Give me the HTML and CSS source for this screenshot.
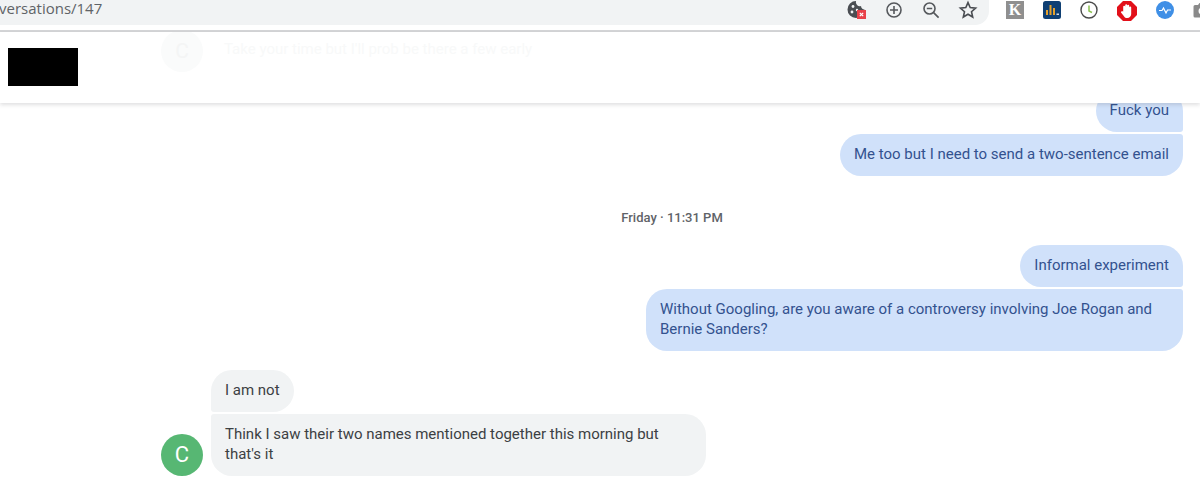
FILE: index.html
```html
<!DOCTYPE html>
<html lang="en">
<head>
  <meta charset="UTF-8">
  <title>Conversation</title>
  <link rel="stylesheet" href="styles.css">
</head>
<body>
  <div class="browser">
    <div class="omnibox">
      <span class="url">versations/147</span>
      <div class="omni-icons">
        <svg class="icon" width="20" height="20" viewBox="0 0 20 20">
          <path d="M9 1a8.500 8.500 0 1 0 8.500 8.500A4 4 0 0 1 14 6a4 4 0 0 1-5-5z" fill="#4a4d52"/>
          <circle cx="6" cy="6.500" r="1.400" fill="#f1f3f4"/>
          <circle cx="5" cy="12" r="1.400" fill="#f1f3f4"/>
          <circle cx="10" cy="10" r="1.200" fill="#f1f3f4"/>
          <rect x="10" y="10" width="9" height="9" fill="#e8414a"/>
          <path d="M12.800 12.800l3.400 3.400m0-3.400l-3.400 3.400" stroke="#fff" stroke-width="1.200"/>
        </svg>
        <svg class="icon" width="20" height="20" viewBox="0 0 20 20" fill="none" stroke="#55585c" stroke-width="1.600">
          <circle cx="10" cy="10" r="7"/>
          <path d="M10 6v8M6 10h8"/>
        </svg>
        <svg class="icon" width="20" height="20" viewBox="0 0 20 20" fill="none" stroke="#55585c" stroke-width="1.600">
          <circle cx="8.500" cy="8.500" r="5.500"/>
          <path d="M5.800 8.500h5.400M12.600 12.600l5 5"/>
        </svg>
        <svg class="icon" width="20" height="20" viewBox="0 0 20 20" fill="none" stroke="#4a4d52" stroke-width="1.600">
          <path d="M10 2.600l2.200 5 5.400.5-4.100 3.600 1.200 5.300L10 14.200l-4.700 2.800 1.200-5.300L2.400 8.100l5.400-.5z"/>
        </svg>
      </div>
    </div>
    <div class="extensions">
      <div class="ext ext-k">K</div>
      <svg class="ext" width="18" height="18" viewBox="0 0 18 18">
        <rect width="18" height="18" rx="2.500" fill="#0f3f73"/>
        <path d="M3 14V9h2v5zM6.500 14V4h2v10zM10 14V7h2v7z" fill="#e5a12c"/>
        <rect x="13.500" y="12.500" width="2.500" height="1.500" fill="#d8dde3"/>
      </svg>
      <svg class="ext" width="18" height="18" viewBox="0 0 18 18" fill="none">
        <circle cx="9" cy="9" r="8" stroke="#4b4b4b" stroke-width="1.400"/>
        <path d="M9 4.500V10l3 1.500" stroke="#8cc152" stroke-width="1.500"/>
      </svg>
      <svg class="ext" width="20" height="20" viewBox="0 0 20 20">
        <path d="M6 0h8l6 6v8l-6 6H6l-6-6V6z" fill="#e2101a"/>
        <path d="M6.200 10.500V5.800a1 1 0 0 1 2 0V4.200a1 1 0 0 1 2 0v.6a1 1 0 0 1 2 0V6.400a1 1 0 0 1 2 0V13c0 2.300-1.600 4-3.900 4-2 0-3-1-3.900-2.600L4 11.600c-.6-1.100 1.300-2 2.200-1.100z" fill="#fff"/>
      </svg>
      <svg class="ext" width="18" height="18" viewBox="0 0 18 18">
        <circle cx="9" cy="9" r="9" fill="#3f8fe6"/>
        <path d="M3 9.500h3l1.500-2.500L10 12l1.500-3h3.500" fill="none" stroke="#fff" stroke-width="1.200"/>
      </svg>
      <svg class="ext" width="18" height="18" viewBox="0 0 18 18">
        <path d="M2 4h3l1.500-2h5L13 4h3a1.500 1.500 0 0 1 1.500 1.500V15a1.500 1.500 0 0 1-1.500 1.500H2A1.500 1.500 0 0 1 .5 15V5.500A1.500 1.500 0 0 1 2 4z" fill="#8a8a8a"/>
        <circle cx="9" cy="10" r="3.500" fill="#fff"/>
      </svg>
    </div>
  </div>

  <header class="topbar">
    <div class="redacted"></div>
    <div class="ghost-avatar">C</div>
    <div class="ghost-text">Take your time but I'll prob be there a few early</div>
  </header>

  <main class="thread">
    <div class="bubble out first">Fuck you</div>
    <div class="bubble out last">Me too but I need to send a two-sentence email</div>

    <div class="stamp">Friday · 11:31 PM</div>

    <div class="bubble out first">Informal experiment</div>
    <div class="bubble out last wide-out">Without Googling, are you aware of a controversy involving Joe Rogan and Bernie Sanders?</div>

    <div class="incoming">
      <div class="avatar">C</div>
      <div class="incoming-stack">
        <div class="bubble in first">I am not</div>
        <div class="bubble in last wide-in">Think I saw their two names mentioned together this morning but that's it</div>
      </div>
    </div>
  </main>
</body>
</html>
```

FILE: styles.css
```css
* { margin: 0; padding: 0; box-sizing: border-box; }
html, body {
  height: 100%;
  overflow: hidden;
}
body {
  font-family: Roboto, sans-serif;
  background: #fff;
}
.browser {
  display: flex;
  height: 32px;
  background: #fff;
  border-bottom: 2px solid #d4d5d7;
}
.omnibox {
  width: 989px;
  height: 25px;
  background: #f1f3f4;
  border-bottom-right-radius: 14px;
  display: flex;
  align-items: center;
  justify-content: space-between;
  padding-right: 11px;
}
.url {
  font-family: "Open Sans", sans-serif;
  font-size: 15px;
  color: #606367;
  margin-left: -1px;
  margin-top: -9px;
}
.omni-icons {
  display: flex;
  gap: 17px;
  margin-top: -6px;
}
.extensions {
  display: flex;
  align-items: flex-start;
  gap: 19px;
  padding-left: 17px;
  padding-top: 1px;
  overflow: hidden;
  flex: 1;
}
.ext {
  flex-shrink: 0;
}
.ext-k {
  width: 18px;
  height: 18px;
  background: #8f8f8f;
  color: #fff;
  font-family: "Liberation Serif", serif;
  font-weight: bold;
  font-size: 16px;
  line-height: 18px;
  text-align: center;
}
.topbar {
  position: relative;
  z-index: 2;
  height: 71px;
  background: #fff;
  box-shadow: 0 2px 4px rgba(60, 64, 67, 0.16);
  display: flex;
  align-items: flex-start;
  overflow: hidden;
}
.redacted {
  width: 70px;
  height: 38px;
  background: #000;
  margin: 16px 0 0 8px;
}
.ghost-avatar {
  width: 42px;
  height: 42px;
  border-radius: 50%;
  background: #fafbfb;
  color: #f4f5f5;
  font-size: 21px;
  line-height: 42px;
  text-align: center;
  margin: -2px 0 0 83px;
}
.ghost-text {
  font-size: 15px;
  color: #f8f9f9;
  margin: 8px 0 0 21px;
}
.thread {
  margin-top: -13px;
  padding: 0 17px 0 161px;
  display: flex;
  flex-direction: column;
  align-items: flex-end;
}
.bubble {
  font-size: 15px;
  line-height: 20px;
  padding: 10px 14px 12px;
  border-radius: 21px;
}
.out {
  background: #d0e1fa;
  color: #33528f;
  margin-bottom: 2px;
}
.out.first {
  border-bottom-right-radius: 3px;
}
.out.last {
  border-top-right-radius: 3px;
}
.wide-out {
  width: 537px;
}
.stamp {
  align-self: center;
  font-size: 13px;
  font-weight: 500;
  line-height: 16px;
  color: #5f6368;
  margin: 32px 0 19px;
}
.incoming {
  align-self: flex-start;
  display: flex;
  align-items: flex-end;
  gap: 8px;
  margin-top: 17px;
}
.avatar {
  width: 42px;
  height: 42px;
  border-radius: 50%;
  background: #57b773;
  color: #fff;
  font-size: 22px;
  line-height: 42px;
  text-align: center;
}
.incoming-stack {
  display: flex;
  flex-direction: column;
  align-items: flex-start;
  gap: 2px;
}
.in {
  background: #f1f3f4;
  color: #3c4043;
}
.in.first {
  border-bottom-left-radius: 3px;
}
.in.last {
  border-top-left-radius: 3px;
}
.wide-in {
  width: 495px;
}
```
